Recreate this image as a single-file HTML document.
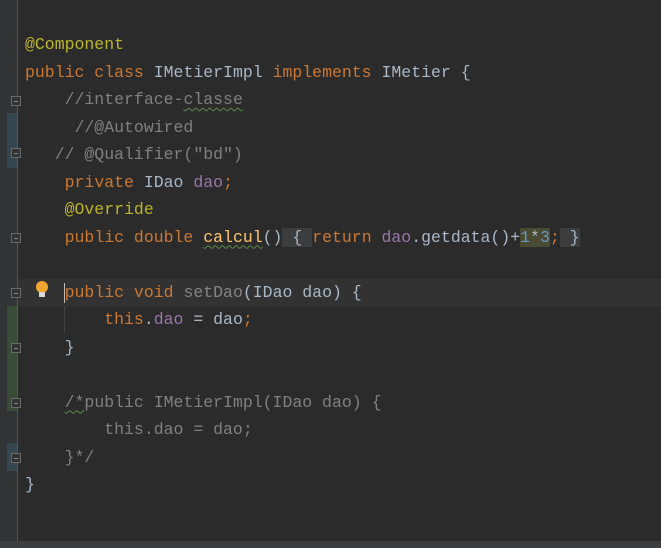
<!DOCTYPE html>
<html><head><style>
body{margin:0;width:661px;height:548px;background:#2b2b2b;position:relative;overflow:hidden;font-family:"Liberation Mono",monospace;font-size:16.5px}
.g{position:absolute;left:0;top:0;width:17px;height:541px;background:#313335}
.gl{position:absolute;left:17px;top:0;width:1px;height:541px;background:#555}
.bb{position:absolute;left:0;top:541px;width:661px;height:7px;background:#3c3f41}
.cur{position:absolute;left:18px;top:279px;width:643px;height:27px;background:#323232}
.l{position:absolute;left:25px;height:27.5px;line-height:27.5px;white-space:pre;color:#a9b7c6}
.k{color:#cc7832}.a{color:#bbb529}.f{color:#9876aa}.c{color:#808080}.m{color:#ffc66d}.n{color:#6897bb}.u{color:#848484}
.box{background:#3b3d3e}
.hl{background:#4a4a33}
.wv{text-decoration:underline wavy #5a8a4a;text-decoration-thickness:1px;text-underline-offset:3px}
.mk{position:absolute;left:7px;width:10px}
.fd{position:absolute;left:11px;width:10px;height:10px;border:1px solid #6a6a6a;box-sizing:border-box;background:#313335}
.fd:after{content:"";position:absolute;left:2px;top:4px;width:4px;height:1px;background:#888}
</style></head><body>
<div class="g"></div>
<div class="mk" style="top:113px;height:55px;background:#374752"></div>
<div class="mk" style="top:306px;height:105px;background:#384c38"></div>
<div class="mk" style="top:443px;height:28px;background:#374752"></div>
<div class="gl"></div>
<div class="cur"></div>
<div class="fd" style="top:96px"></div>
<div class="fd" style="top:148px"></div>
<div class="fd" style="top:233px"></div>
<div class="fd" style="top:288px"></div>
<div class="fd" style="top:343px"></div>
<div class="fd" style="top:398px"></div>
<div class="fd" style="top:453px"></div>
<div style="position:absolute;left:36px;top:281px;width:12px;height:12px;border-radius:50%;background:#f0a732"></div>
<div style="position:absolute;left:39px;top:292px;width:6px;height:5px;background:#d8d8d8"></div>
<div style="position:absolute;left:64px;top:283px;width:1px;height:20px;background:#bbb"></div>
<div style="position:absolute;left:64px;top:306px;width:1px;height:26px;background:#444"></div>
<div class="l a" style="top:31px">@Component</div>
<div class="l" style="top:58.5px"><span class="k">public class </span>IMetierImpl <span class="k">implements </span>IMetier {</div>
<div class="l c" style="top:86px">    //interface-<span class="wv">classe</span></div>
<div class="l c" style="top:113.5px">     //@Autowired</div>
<div class="l c" style="top:141px">   // @Qualifier("bd")</div>
<div class="l" style="top:168.5px">    <span class="k">private </span>IDao <span class="f">dao</span><span class="k">;</span></div>
<div class="l a" style="top:196px">    @Override</div>
<div class="l" style="top:223.5px">    <span class="k">public double </span><span class="m wv">calcul</span>()<span class="box"> { </span><span class="k">return </span><span class="f">dao</span>.getdata()+<span class="n hl">1</span><span class="hl">*</span><span class="n hl">3</span><span class="k">;</span><span class="box"> }</span></div>
<div class="l" style="top:278.5px">    <span class="k">public void </span><span class="u">setDao</span>(IDao dao) {</div>
<div class="l" style="top:306px">        <span class="k">this</span>.<span class="f">dao</span> = dao<span class="k">;</span></div>
<div class="l" style="top:333.5px">    }</div>
<div class="l c" style="top:388.5px">    <span class="wv">/*</span>public IMetierImpl(IDao dao) {</div>
<div class="l c" style="top:416px">        this.dao = dao;</div>
<div class="l c" style="top:443.5px">    }*/</div>
<div class="l" style="top:471px">}</div>
<div class="bb"></div>
</body></html>
